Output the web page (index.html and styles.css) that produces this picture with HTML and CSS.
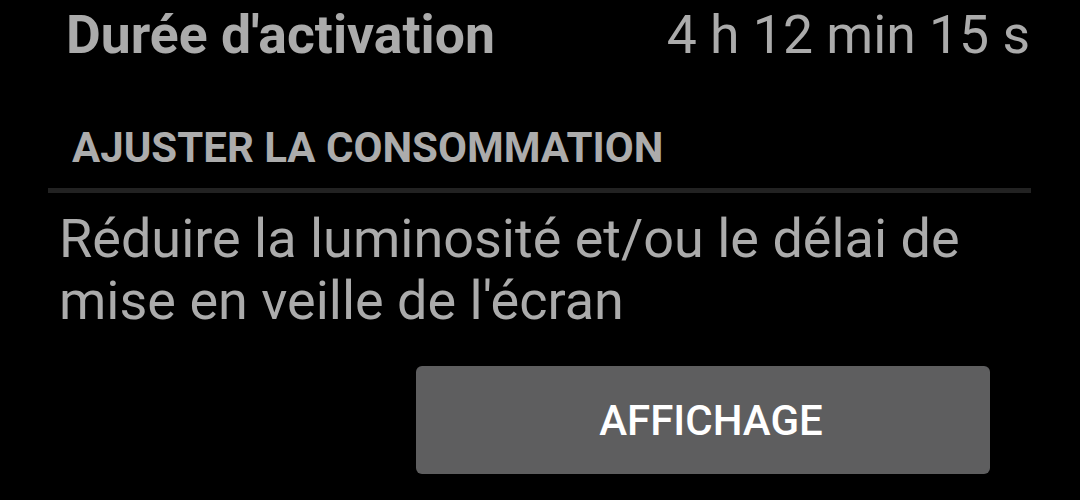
FILE: index.html
```html
<!DOCTYPE html>
<html lang="fr">
<head>
<meta charset="utf-8">
<link rel="stylesheet" href="styles.css">
</head>
<body>
<div class="screen">
  <div class="stat-row">
    <span class="stat-label">Durée d'activation</span>
    <span class="stat-value">4 h 12 min 15 s</span>
  </div>
  <div class="category">AJUSTER LA CONSOMMATION</div>
  <div class="divider"></div>
  <p class="summary">Réduire la luminosité et/ou le délai de mise en veille de l'écran</p>
  <div class="actions">
    <button class="btn">AFFICHAGE</button>
  </div>
</div>
</body>
</html>
```
FILE: styles.css
```css
html, body {
  margin: 0;
  padding: 0;
  background: #000;
}
body {
  width: 1080px;
  height: 500px;
  overflow: hidden;
  font-family: Roboto, "Noto Sans", sans-serif;
  color: #ababab;
}
.screen {
  display: flex;
  flex-direction: column;
}
.stat-row {
  display: flex;
  justify-content: space-between;
  align-items: baseline;
  padding: 4px 50px 0 66px;
  line-height: 61px;
}
.stat-label {
  font-size: 53.5px;
  font-weight: 700;
}
.stat-value {
  font-size: 53.5px;
  font-weight: 400;
}
.category {
  margin-top: 59px;
  padding-left: 72px;
  font-size: 42px;
  line-height: 48px;
  font-weight: 700;
  color: #acacac;
}
.divider {
  margin: 16px 0 0 48px;
  width: 983px;
  height: 5px;
  background: #222;
}
.summary {
  margin: 15px 0 0 0;
  padding: 0 70px 0 59px;
  font-size: 54px;
  line-height: 62px;
  color: #ababab;
}
.actions {
  display: flex;
  margin-top: 34px;
  padding-left: 416px;
}
.btn {
  width: 574px;
  height: 108px;
  display: flex;
  align-items: center;
  justify-content: center;
  background: #5e5e5f;
  border: 0;
  border-radius: 6px;
  color: #fff;
  font-family: Roboto, "Noto Sans", sans-serif;
  font-size: 42px;
  font-weight: 500;
  padding: 0 0 0 16px;
}
```
